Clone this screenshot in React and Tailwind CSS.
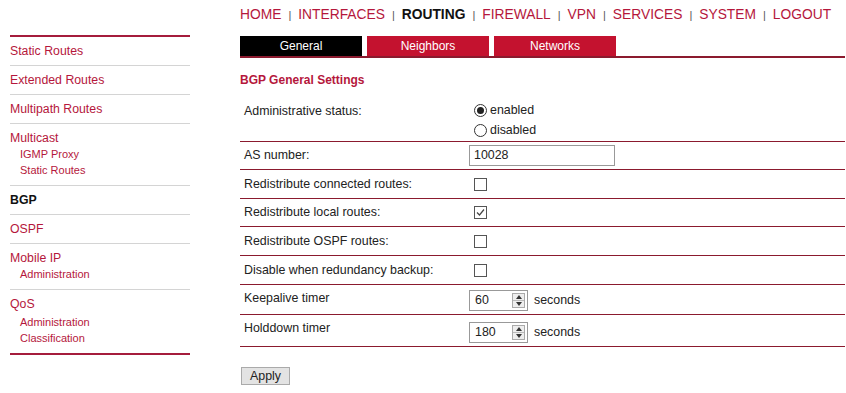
import React from "react";

const red = "text-[#b5173c]";

const navItems = ["HOME", "INTERFACES", "ROUTING", "FIREWALL", "VPN", "SERVICES", "SYSTEM", "LOGOUT"];

const Checkbox = ({ checked }) => (
  <span className="inline-flex w-[13px] h-[13px] border border-[#555] bg-white items-center justify-center">
    {checked && (
      <svg width="9" height="9" viewBox="0 0 9 9">
        <path d="M1 4.5 L3.5 7 L8 1.5" fill="none" stroke="#444" strokeWidth="1.2" />
      </svg>
    )}
  </span>
);

const Radio = ({ checked }) => (
  <span className="inline-flex w-[13px] h-[13px] rounded-full border border-[#333] bg-white items-center justify-center">
    {checked && <span className="w-[7px] h-[7px] rounded-full bg-[#222]" />}
  </span>
);

const Spin = ({ value }) => (
  <span className="flex items-center">
    <span className="flex w-[59px] h-[21px] border border-[#999] bg-white items-center">
      <span className="flex-1 pl-[5px] text-[12.4px] text-[#222]">{value}</span>
      <span className="flex flex-col w-[13px] h-[15px] mr-[2px] border border-[#aaa] bg-[#eee]">
        <span className="flex-1 flex items-center justify-center border-b border-[#bbb]">
          <svg width="6" height="4" viewBox="0 0 6 4"><path d="M0 4 L3 0 L6 4 Z" fill="#333" /></svg>
        </span>
        <span className="flex-1 flex items-center justify-center">
          <svg width="6" height="4" viewBox="0 0 6 4"><path d="M0 0 L3 4 L6 0 Z" fill="#333" /></svg>
        </span>
      </span>
    </span>
    <span className="ml-[6px] text-[12.4px] text-[#222]">seconds</span>
  </span>
);

const Row = ({ label, h, children, top }) => (
  <div className={`flex border-b border-[#8b1a2e] ${h}`}>
    <div className={`w-[229px] pl-[4px] text-[12.4px] text-[#222] ${top ? top : "flex items-center"}`}>{label}</div>
    <div className="flex-1 flex items-center">{children}</div>
  </div>
);

const SideLink = ({ children, bold }) => (
  <div className={`h-[29px] flex items-center text-[12.3px] border-b border-[#d4d4d4] ${bold ? "font-bold text-[#111]" : red}`}>
    {children}
  </div>
);

const Sub = ({ children, mt }) => (
  <div className={`pl-[10px] text-[11px] leading-[16px] ${mt || ""} ${red}`}>{children}</div>
);

export default function App() {
  return (
    <div className="w-[846px] h-[393px] bg-white flex font-['Liberation_Sans',Arial,sans-serif] overflow-hidden">
      <div className="ml-[10px] w-[180px] shrink-0 mt-[35px]">
        <div className="border-t-2 border-[#a51c3c]">
          <SideLink>Static Routes</SideLink>
          <SideLink>Extended Routes</SideLink>
          <SideLink>Multipath Routes</SideLink>
          <div className="border-b border-[#d4d4d4] pt-[7px] pb-[7px]">
            <div className={`text-[12.3px] leading-[15px] ${red}`}>Multicast</div>
            <Sub>IGMP Proxy</Sub>
            <Sub>Static Routes</Sub>
          </div>
          <SideLink bold>BGP</SideLink>
          <SideLink>OSPF</SideLink>
          <div className="border-b border-[#d4d4d4] pt-[7px] pb-[7px]">
            <div className={`text-[12.3px] leading-[15px] ${red}`}>Mobile IP</div>
            <Sub>Administration</Sub>
          </div>
          <div className="border-b-2 border-[#a51c3c] pt-[7px] pb-[7px]">
            <div className={`text-[12.3px] leading-[15px] ${red}`}>QoS</div>
            <Sub mt="mt-[2px]">Administration</Sub>
            <Sub>Classification</Sub>
          </div>
        </div>
      </div>

      <div className="ml-[50px] flex-1 flex flex-col">
        <div className="h-[30px] flex items-center text-[13.8px]">
          {navItems.map((n, i) => (
            <React.Fragment key={n}>
              <span className={n === "ROUTING" ? "font-bold text-[#111]" : red}>{n}</span>
              {i < navItems.length - 1 && <span className="mx-[7px] text-[11px] text-[#555]">|</span>}
            </React.Fragment>
          ))}
        </div>
        <div className="mt-[6px] flex border-b-2 border-[#8b1a2e] mr-[1px]">
          <div className="w-[122px] h-[20px] bg-black text-white text-[12px] flex items-center justify-center">General</div>
          <div className="ml-[5px] w-[122px] h-[20px] bg-[#c4122f] text-white text-[12px] flex items-center justify-center">Neighbors</div>
          <div className="ml-[5px] w-[122px] h-[20px] bg-[#c4122f] text-white text-[12px] flex items-center justify-center">Networks</div>
        </div>
        <div className={`mt-[13px] text-[12px] font-bold ${red}`}>BGP General Settings</div>
        <div className="mt-[7px] mr-[1px]">
          <Row label="Administrative status:" h="h-[46px]" top="pt-[6px]">
            <div className="flex flex-col text-[12.4px] text-[#222] pl-[5px] pt-[4px]">
              <span className="flex items-center gap-[3px] h-[20px]"><Radio checked />enabled</span>
              <span className="flex items-center gap-[3px] h-[20px]"><Radio />disabled</span>
            </div>
          </Row>
          <Row label="AS number:" h="h-[28px]">
            <span className="w-[146px] h-[21px] border border-[#999] flex items-center pl-[4px] text-[12.4px] text-[#222]">10028</span>
          </Row>
          <Row label="Redistribute connected routes:" h="h-[29px]"><span className="pl-[5px] flex"><Checkbox /></span></Row>
          <Row label="Redistribute local routes:" h="h-[28px]"><span className="pl-[5px] flex"><Checkbox checked /></span></Row>
          <Row label="Redistribute OSPF routes:" h="h-[29px]"><span className="pl-[5px] flex"><Checkbox /></span></Row>
          <Row label="Disable when redundancy backup:" h="h-[29px]"><span className="pl-[5px] flex"><Checkbox /></span></Row>
          <Row label="Keepalive timer" h="h-[30px]" top="pt-[4px]"><span className="pt-[1px]"><Spin value="60" /></span></Row>
          <Row label="Holddown timer" h="h-[32px]" top="pt-[4px]"><span className="pt-[3px]"><Spin value="180" /></span></Row>
        </div>
        <div className="mt-[20px]">
          <button type="button" className="ml-[1px] w-[49px] h-[18px] bg-[#e3e3e3] border border-[#aaa] text-[12.4px] text-[#222] flex items-center justify-center">
            Apply
          </button>
        </div>
      </div>
    </div>
  );
}
